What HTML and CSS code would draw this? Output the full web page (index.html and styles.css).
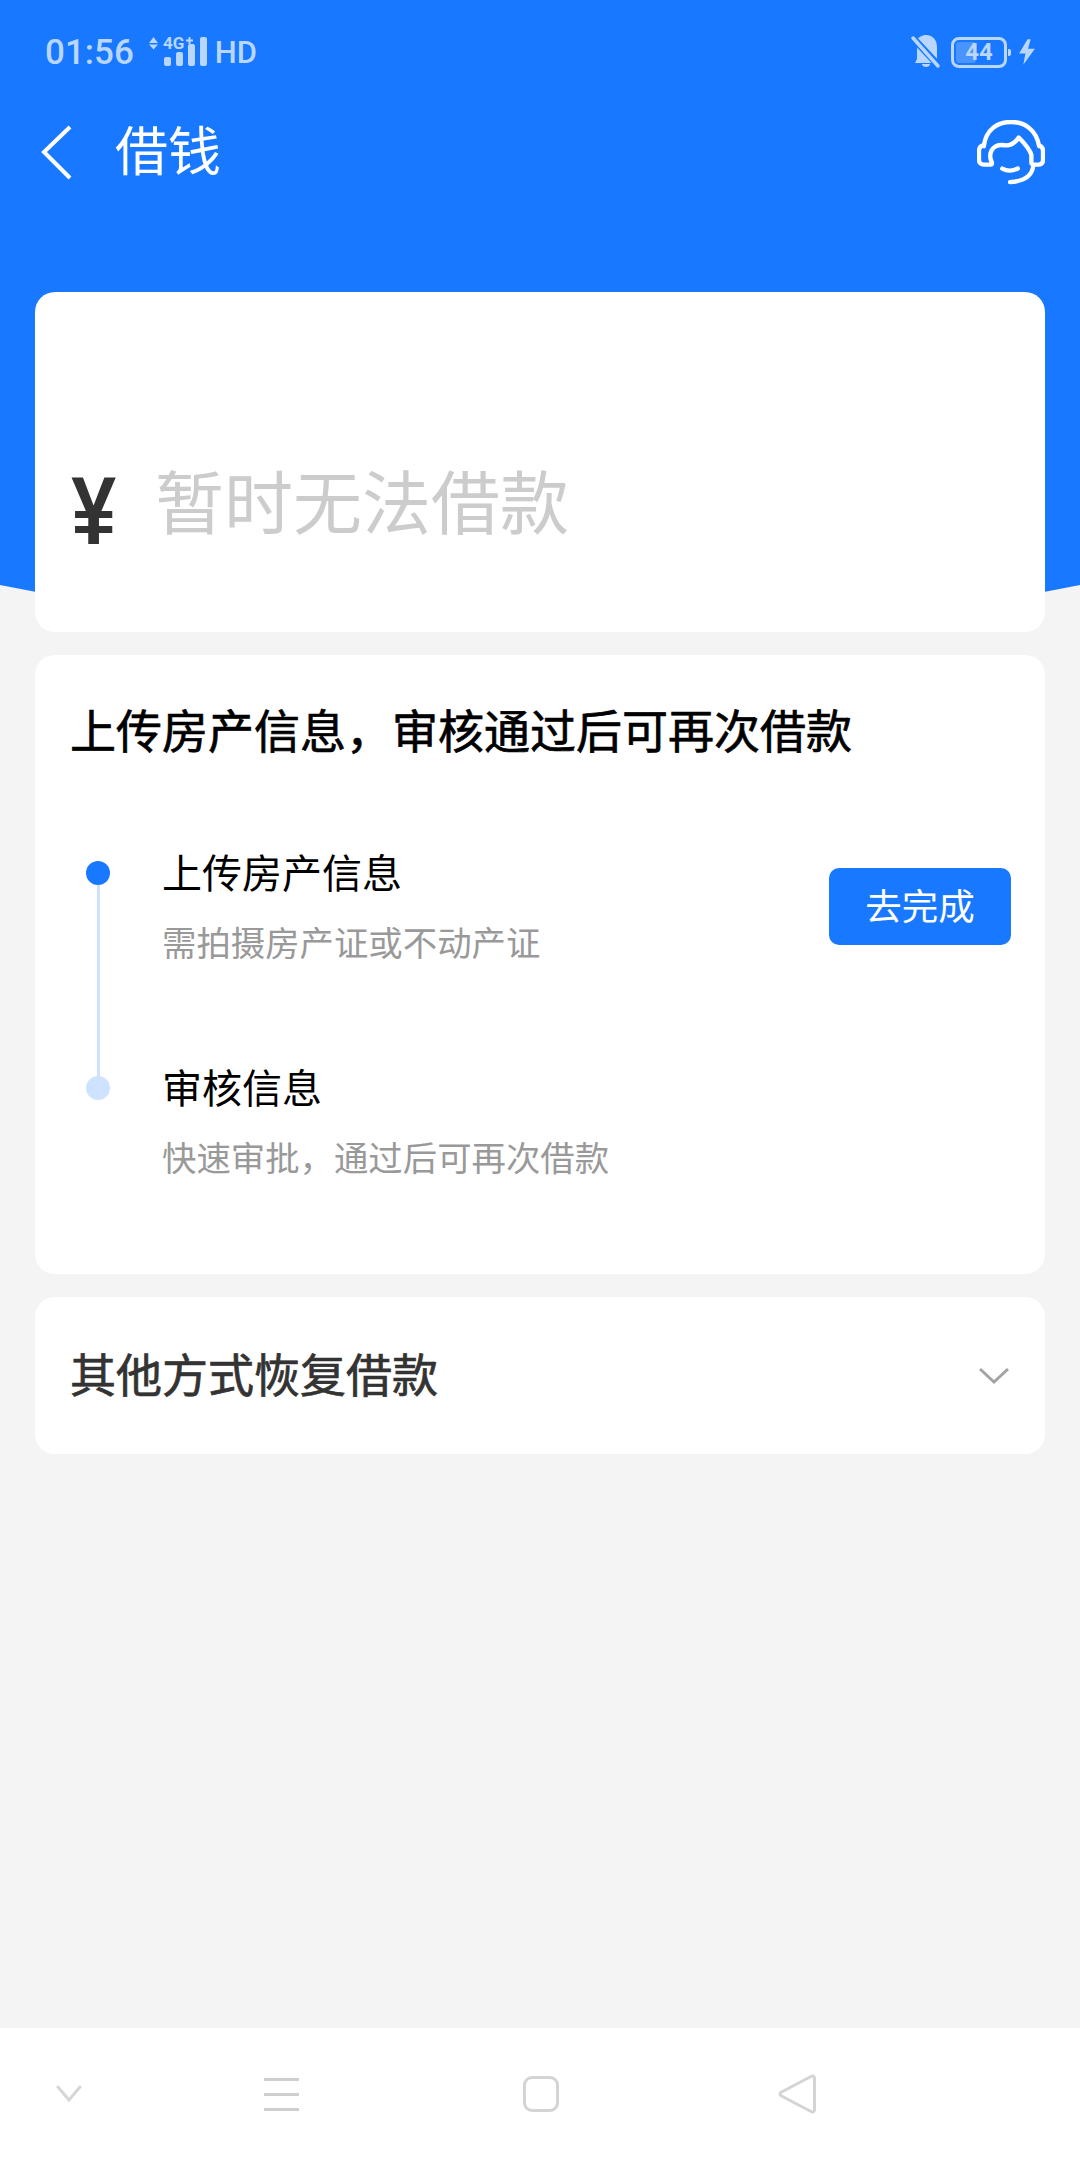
FILE: index.html
```html
<!DOCTYPE html>
<html lang="zh">
<head>
    <meta charset="utf-8" />
    <title>借钱</title>
    <link rel="stylesheet" href="styles.css">
</head>
<body>
    <div class="page">
        <svg class="hero" width="1080" height="600" viewBox="0 0 1080 600">
            <path d="M0 0H1080V585Q540 693 0 585Z" fill="#1878ff" />
        </svg>

        <div class="statusbar">
            <span class="time">01:56</span>
            <svg class="signal" width="62" height="34" viewBox="0 0 62 34">
                <path d="M1 9 5.500 3 10 9ZM1 10.500 5.500 15.500 10 10.500Z" fill="#b9d6ff" />
                <text x="15" y="15" class="signal-text">4G</text>
                <path d="M38 6.500H45M41.500 3V10" stroke="#b9d6ff" stroke-width="2" />
                <rect x="16" y="23" width="7" height="9" rx="2" fill="#b9d6ff" />
                <rect x="28" y="18" width="7" height="14" rx="2" fill="#b9d6ff" />
                <rect x="40" y="10" width="7" height="22" rx="2" fill="#b9d6ff" />
                <rect x="52" y="3" width="7" height="29" rx="2" fill="#b9d6ff" />
            </svg>
            <span class="hd">HD</span>
            <svg class="bell" width="32" height="36" viewBox="0 0 32 36">
                <path d="M6 8C8 3 12 1 16 1C23 1 27 6 27 13V26L29 29H5L7 25V13Z" fill="#b9d6ff" />
                <path d="M12 30H20C20 34 12 34 12 30Z" fill="#b9d6ff" />
                <path d="M1 2 31 34" stroke="#1878ff" stroke-width="7" />
                <path d="M3 4 28 32" stroke="#b9d6ff" stroke-width="3.500" stroke-linecap="round" />
            </svg>
            <div class="battery">
                <div class="battery-level"></div>
                <span class="battery-num">44</span>
            </div>
            <svg class="bolt" width="18" height="26" viewBox="0 0 17 24">
                <path d="M9 0 1 13.500H7L5 24 16 9H9.500L12 0Z" fill="#b9d6ff" />
            </svg>
        </div>

        <div class="topbar">
            <svg class="back" width="32" height="56" viewBox="0 0 32 56">
                <path d="M29 2 3 27 29 53" fill="none" stroke="#fff" stroke-width="4" />
            </svg>
            <span class="title">借钱</span>
            <svg class="service" width="68" height="66" viewBox="0 0 70 68">
                <g fill="none" stroke="#fff" stroke-width="4.500" stroke-linecap="round" stroke-linejoin="round">
                    <path d="M7 27C9 10 21 2 35 2C49 2 61 10 64 27" />
                    <path d="M7 26C3 27 2 29 2 32V41C2 44 4 46 7 46H14C15 46 16 45 15 43C14 41 13 38 14 34C16 27 22 25 28 26C34 27 39 24 43 18C48 23 54 29 56 36V44C56 45 57 46 58 46H63C67 46 68 44 68 41V32C68 29 67 27 64 26" />
                    <path d="M26 50C31 53 36 53 42 50" />
                    <path d="M58 47C57 56 50 63 34 64" />
                </g>
            </svg>
        </div>

        <main class="content">
            <section class="card card-amount">
                <span class="yen"><span class="yen-mark">¥</span></span>
                <span class="amount-text">暂时无法借款</span>
            </section>

            <section class="card card-upload">
                <h2 class="upload-title">上传房产信息&#65292;审核通过后可再次借款</h2>
                <div class="step step-first">
                    <div class="marker">
                        <div class="dot dot-on"></div>
                        <div class="line"></div>
                    </div>
                    <div class="step-body">
                        <div class="step-title">上传房产信息</div>
                        <div class="step-sub">需拍摄房产证或不动产证</div>
                    </div>
                    <div class="btn">去完成</div>
                </div>
                <div class="step">
                    <div class="marker">
                        <div class="dot dot-off"></div>
                    </div>
                    <div class="step-body">
                        <div class="step-title">审核信息</div>
                        <div class="step-sub">快速审批&#65292;通过后可再次借款</div>
                    </div>
                </div>
            </section>

            <section class="card card-other">
                <span class="other-title">其他方式恢复借款</span>
                <svg width="30" height="18" viewBox="0 0 30 18">
                    <path d="M1 2 15 15 29 2" fill="none" stroke="#a3a3a3" stroke-width="3" />
                </svg>
            </section>
        </main>

        <div class="navbar">
            <svg class="nav-hide" width="26" height="18" viewBox="0 0 26 18">
                <path d="M2 2 13 15 24 2" fill="none" stroke="#d6d6d6" stroke-width="3" stroke-linecap="round" />
            </svg>
            <div class="nav-menu">
                <div></div>
                <div></div>
                <div></div>
            </div>
            <div class="nav-home"></div>
            <svg class="nav-back" width="38" height="40" viewBox="0 0 38 40">
                <path d="M33 2.500C35 1.500 36.500 2.500 36.500 4.500V35.500C36.500 37.500 35 38.500 33 37.500L3.500 22C1.500 21 1.500 19 3.500 18Z" fill="none" stroke="#d4d4d4" stroke-width="3" />
            </svg>
        </div>
    </div>
</body>
</html>
```

FILE: styles.css
```css
* {
    box-sizing: border-box;
}

body {
    margin: 0;
    font-family: "Noto Sans CJK SC", "Liberation Sans", sans-serif;
}

.page {
    position: relative;
    display: flex;
    flex-direction: column;
    width: 1080px;
    height: 2160px;
    background-color: #f4f4f4;
    overflow: hidden;
}

.hero {
    position: absolute;
    left: 0;
    top: 0;
}

/* status bar */
.statusbar {
    position: relative;
    display: flex;
    align-items: center;
    height: 104px;
    padding: 0 44px 0 45px;
    color: #b9d6ff;
    font-family: Roboto, sans-serif;
}

.time {
    font-size: 35px;
    font-weight: 500;
}

.signal {
    margin-left: 14px;
    margin-top: -2px;
}

.signal-text {
    font-family: Roboto, sans-serif;
    font-size: 17px;
    font-weight: 700;
    fill: #b9d6ff;
}

.hd {
    margin-left: 5px;
    font-size: 31px;
    font-weight: 500;
}

.bell {
    margin-left: auto;
}

.battery {
    position: relative;
    display: flex;
    align-items: center;
    justify-content: center;
    width: 56px;
    height: 31px;
    margin-left: 9px;
    border: 3px solid #b9d6ff;
    border-radius: 8px;
}

.battery::after {
    content: "";
    position: absolute;
    right: -7px;
    top: 9px;
    width: 3px;
    height: 7px;
    background-color: #b9d6ff;
    border-radius: 0 2px 2px 0;
}

.battery-level {
    position: absolute;
    left: 2px;
    top: 2px;
    bottom: 2px;
    width: 20px;
    background-color: #4a94ff;
    border-radius: 3px;
}

.battery-num {
    position: relative;
    font-size: 24px;
    font-weight: 700;
    line-height: 1;
}

.bolt {
    margin-left: 11px;
}

/* title bar */
.topbar {
    position: relative;
    display: flex;
    align-items: center;
    height: 92px;
    padding: 0 35px 0 41px;
}

.back {
    flex: none;
    margin-top: 6px;
}

.title {
    margin-left: 42px;
    margin-bottom: 5px;
    color: #fff;
    font-size: 53px;
    line-height: 60px;
}

.service {
    margin-left: auto;
    margin-top: 6px;
}

/* cards */
.content {
    position: relative;
    display: flex;
    flex-direction: column;
    gap: 23px;
    padding: 96px 35px 0;
}

.card {
    background-color: #fff;
    border-radius: 20px;
}

.card-amount {
    display: flex;
    align-items: flex-start;
    height: 340px;
    padding: 158px 35px 0 12px;
}

.yen {
    flex: none;
    width: 93px;
    margin-right: 15px;
    color: #333;
    font-family: "Liberation Sans", sans-serif;
    font-size: 96px;
    font-weight: 700;
    line-height: 122px;
    text-align: center;
}

.yen-mark {
    display: inline-block;
    transform: scaleX(0.84);
}

.amount-text {
    margin-top: -1px;
    color: #ccc;
    font-size: 69px;
    line-height: 100px;
}

.card-upload {
    padding: 46px 34px 96px 35px;
}

.upload-title {
    margin: 0 0 93px;
    color: #000;
    font-size: 46px;
    font-weight: 400;
    -webkit-text-stroke: 0.7px #000;
    line-height: 54px;
}

.step {
    display: flex;
    padding-left: 16px;
}

.step-first {
    height: 215px;
}

.marker {
    display: flex;
    flex-direction: column;
    align-items: center;
    width: 24px;
    margin-right: 52px;
}

.dot {
    flex: none;
    width: 24px;
    height: 24px;
    margin-top: 13px;
    border-radius: 50%;
}

.dot-on {
    background-color: #1878ff;
}

.dot-off {
    background-color: #cfe2ff;
}

.line {
    flex: 1;
    width: 3px;
    margin-bottom: -13px;
    background-color: #cfe2ff;
}

.step-body {
    margin-top: -2px;
}

.step-title {
    color: #000;
    font-size: 40px;
    line-height: 50px;
}

.step-sub {
    margin-top: 23px;
    color: #999;
    font-size: 34.400px;
    line-height: 44px;
}

.btn {
    width: 182px;
    height: 77px;
    margin: 20px 0 0 auto;
    background-color: #1878ff;
    border-radius: 10px;
    color: #fff;
    font-size: 36.500px;
    line-height: 73px;
    text-align: center;
}

.card-other {
    display: flex;
    align-items: center;
    justify-content: space-between;
    height: 157px;
    padding: 0 36px 0 35px;
}

.other-title {
    margin-bottom: 8px;
    color: #333;
    font-size: 46px;
    font-weight: 400;
    -webkit-text-stroke: 0.7px #333;
}

/* navigation bar */
.navbar {
    display: flex;
    align-items: center;
    height: 132px;
    margin-top: auto;
    padding-left: 56px;
    background-color: #fff;
}

.nav-menu {
    display: flex;
    flex-direction: column;
    gap: 12px;
    width: 35px;
    margin-left: 182px;
}

.nav-menu div {
    height: 3px;
    background-color: #cfcfcf;
}

.nav-home {
    width: 36px;
    height: 36px;
    margin-left: 224px;
    border: 3px solid #d4d4d4;
    border-radius: 9px;
}

.nav-back {
    margin-left: 219px;
}
```
